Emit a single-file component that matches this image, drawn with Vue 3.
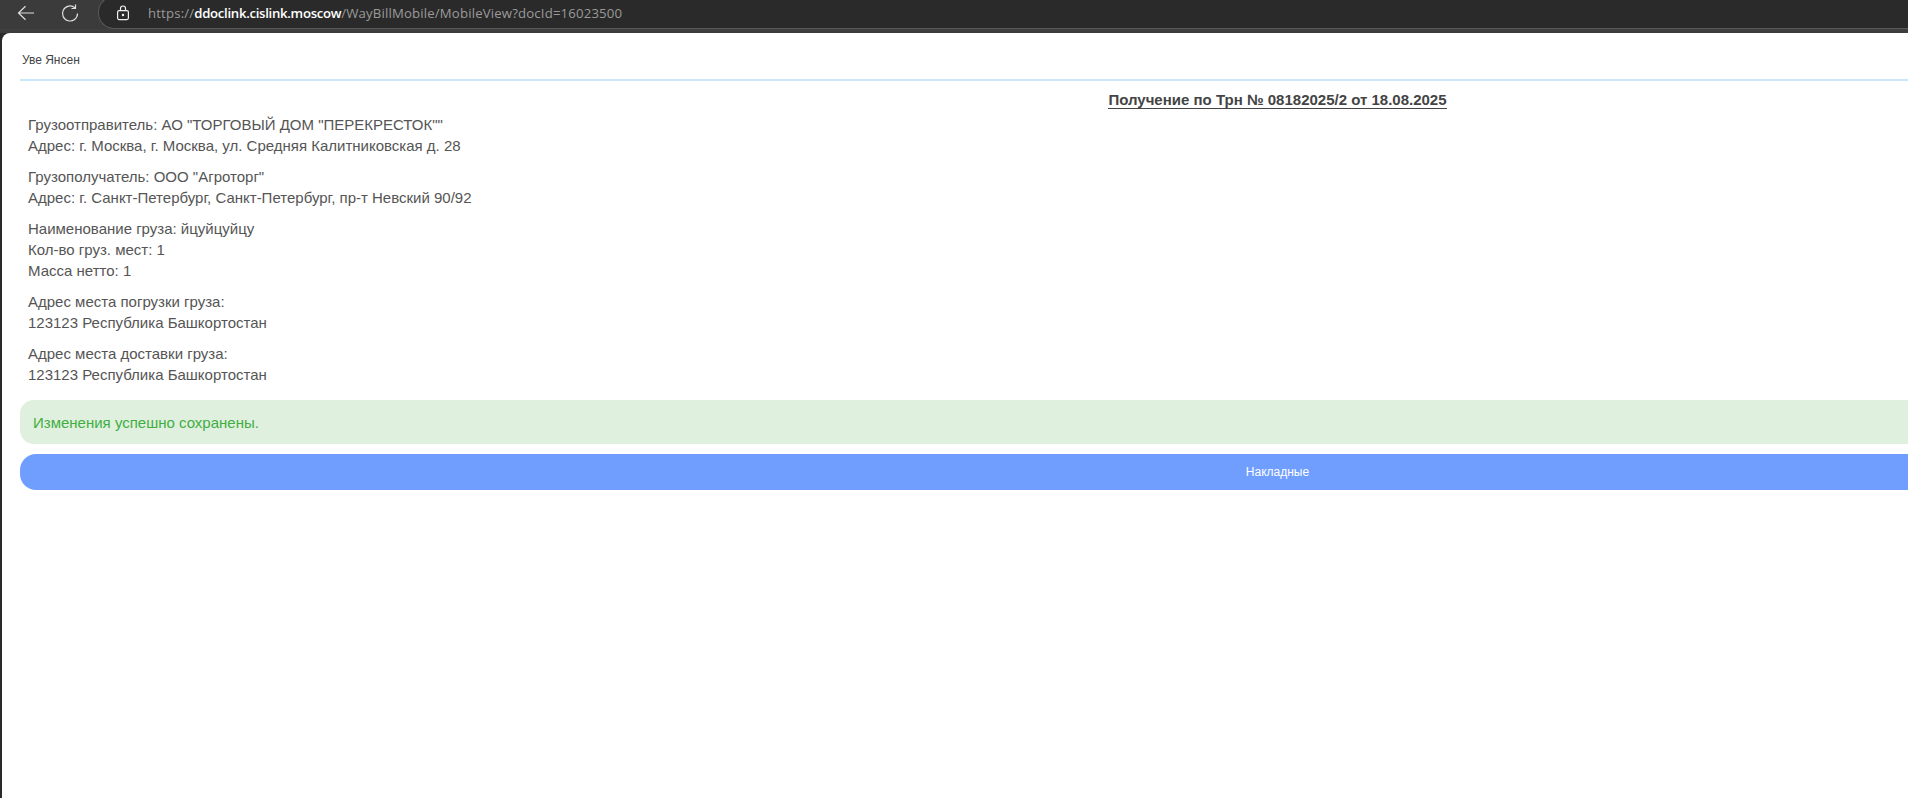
<script setup>
const blocks = [
  ['Грузоотправитель: АО "ТОРГОВЫЙ ДОМ "ПЕРЕКРЕСТОК""', 'Адрес: г. Москва, г. Москва, ул. Средняя Калитниковская д. 28'],
  ['Грузополучатель: ООО "Агроторг"', 'Адрес: г. Санкт-Петербург, Санкт-Петербург, пр-т Невский 90/92'],
  ['Наименование груза: йцуйцуйцу', 'Кол-во груз. мест: 1', 'Масса нетто: 1'],
  ['Адрес места погрузки груза:', '123123 Республика Башкортостан'],
  ['Адрес места доставки груза:', '123123 Республика Башкортостан'],
]
</script>

<template>
  <div class="window">
    <header class="toolbar">
      <svg class="nav back" width="20" height="20" viewBox="0 0 20 20" fill="none" stroke="#e0e0e0" stroke-width="1.2">
        <path d="M18 10H2.500M9.500 3.300 2.500 10l7 6.700" />
      </svg>
      <svg class="nav reload" width="20" height="20" viewBox="0 0 20 20" fill="none" stroke="#e0e0e0" stroke-width="1.2">
        <path d="M17.500 10.500a7.500 7.500 0 1 1-2.500-5.600M15.500 1.500v4h-4" />
      </svg>
      <div class="address">
        <svg class="lock" width="14" height="16" viewBox="0 0 14 16" fill="none" stroke="#f0f0f0" stroke-width="1.2">
          <rect x="1.600" y="5.600" width="10.800" height="9" rx="1.500" />
          <path d="M4.500 5.500V3.500a2.500 2.500 0 0 1 5 0v2" />
          <circle cx="7" cy="10" r=".6" fill="#f0f0f0" />
        </svg>
        <span class="url">https://<b>ddoclink.cislink.moscow</b>/WayBillMobile/MobileView?docId=16023500</span>
      </div>
    </header>
    <div class="strip">
      <main class="page">
        <div class="content">
          <div class="user">Уве Янсен</div>
          <h1 class="title"><span>Получение по Трн № 08182025/2 от 18.08.2025</span></h1>
          <section class="details">
            <p v-for="(lines, i) in blocks" :key="i" class="block">
              <span v-for="line in lines" :key="line" class="line">{{ line }}</span>
            </p>
          </section>
          <div class="alert">Изменения успешно сохранены.</div>
          <button class="action" type="button">Накладные</button>
        </div>
      </main>
    </div>
  </div>
</template>

<style>
html, body { margin: 0; overflow: hidden; background: #fff; }
</style>

<style scoped>
.window {
  width: 1908px;
  height: 798px;
  overflow: hidden;
  display: flex;
  flex-direction: column;
  font-family: "Liberation Sans", Arial, sans-serif;
  background: #2a2a2a;
}
.toolbar {
  height: 29px;
  flex: none;
  box-sizing: border-box;
  display: flex;
  align-items: flex-start;
  background: #3b3b3b;
  padding-left: 16px;
  overflow: hidden;
}
.nav { flex: none; margin-top: 3px; }
.reload { margin-left: 24px; }
.address {
  margin: -4px 0 0 18px;
  flex: 1;
  height: 33px;
  box-sizing: border-box;
  background: #2a2a2a;
  border: 1px solid #585858;
  border-right: 0;
  border-radius: 16px 0 0 16px;
  display: flex;
  align-items: center;
  padding: 0 0 0 17px;
}
.lock { flex: none; margin-top: 1px; }
.url {
  margin-left: 18px;
  margin-top: 1px;
  font-family: "Open Sans", "Noto Sans", sans-serif;
  font-size: 13.2px;
  letter-spacing: .16px;
  color: #9a9a9a;
  white-space: nowrap;
}
.url b { color: #fff; font-weight: 600; letter-spacing: -.3px; }
.strip {
  flex: 1;
  min-height: 0;
  padding: 4px 0 0 2px;
  background: linear-gradient(#404040, #3c3c3c 4px, #2a2a2a 4px);
  display: flex;
}
.page {
  flex: 1;
  background: #fff;
  border-top-left-radius: 8px;
  overflow: hidden;
}
.content {
  width: 2515px;
  margin-left: 18px;
  color: #555;
}
.user {
  height: 48px;
  box-sizing: border-box;
  padding: 20px 0 0 2px;
  font-size: 12px;
  line-height: 14px;
  color: #444;
  border-bottom: 2px solid #c9e8fb;
}
.title {
  margin: 10px 0 5px;
  text-align: center;
  font-size: 15px;
  line-height: 18px;
  font-weight: 700;
  color: #444;
}
.title span { border-bottom: 1px solid #444; }
.details { padding-left: 8px; }
.block { margin: 0 0 10px; font-size: 15px; }
.line { display: block; line-height: 21px; }
.alert {
  margin-top: 15px;
  height: 44px;
  box-sizing: border-box;
  padding: 0 13px;
  display: flex;
  align-items: center;
  background: #dff0df;
  color: #3fae3f;
  font-size: 15px;
  border-radius: 14px;
}
.action {
  display: block;
  width: 100%;
  height: 36px;
  margin-top: 10px;
  border: 0;
  padding: 0;
  background: #6f9eff;
  color: #fff;
  font-family: inherit;
  font-size: 12px;
  border-radius: 16px;
}
</style>
